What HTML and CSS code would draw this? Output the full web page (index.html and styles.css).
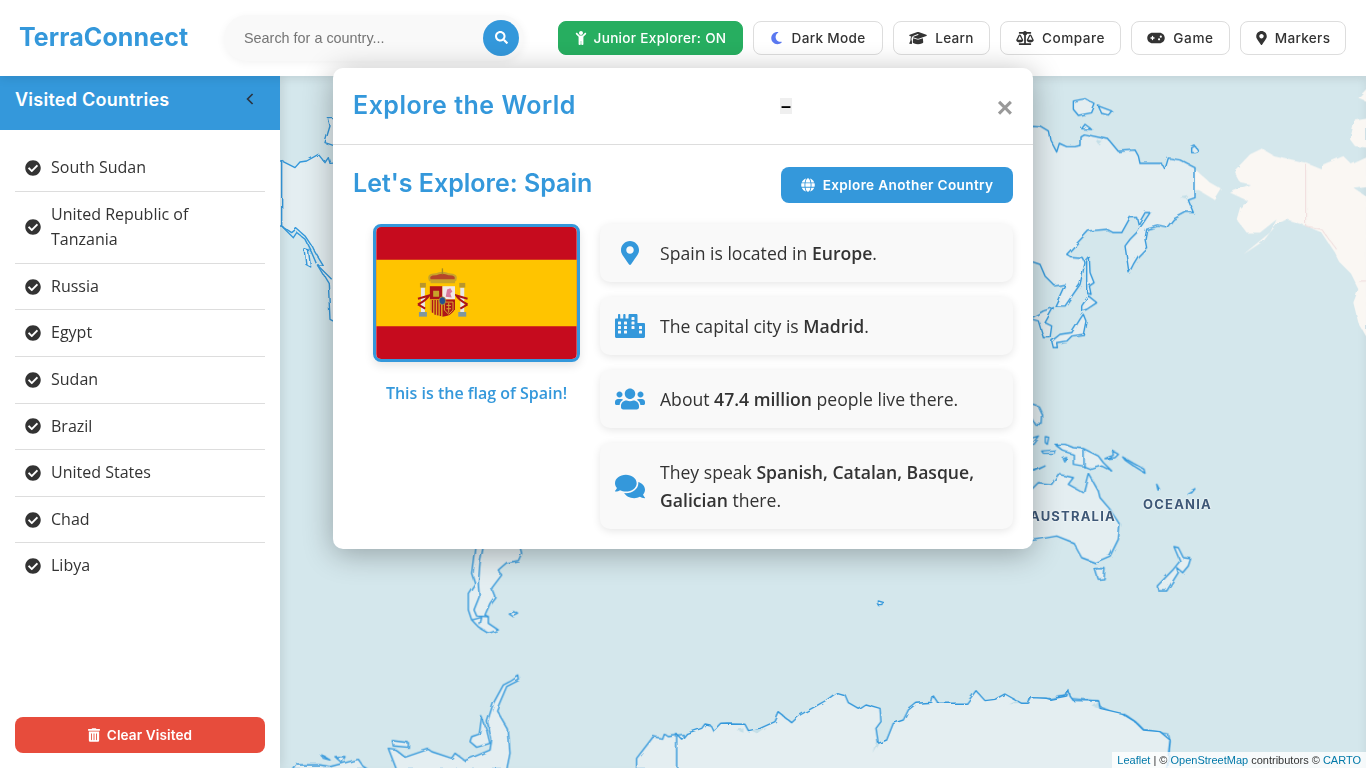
FILE: index.html
```html
<!DOCTYPE html>
<html lang="en">
<head>
  <meta charset="UTF-8" />
  <meta name="viewport" content="width=device-width, initial-scale=1.0"/>
  <title>TerraConnect</title>
  <link rel="stylesheet" href="styles.css">
</head>
<body>
  <svg class="icon-defs" xmlns="http://www.w3.org/2000/svg">
    <symbol id="i-search" viewBox="0 0 512 512"><path d="M505 442.7L405.3 343c-4.5-4.5-10.6-7-17-7H372c27.6-35.3 44-79.7 44-128C416 93.1 322.9 0 208 0S0 93.1 0 208s93.1 208 208 208c48.3 0 92.7-16.4 128-44v16.3c0 6.4 2.5 12.5 7 17l99.7 99.7c9.4 9.4 24.6 9.4 33.9 0l28.3-28.3c9.4-9.4 9.4-24.6.1-34zM208 336c-70.7 0-128-57.2-128-128 0-70.7 57.2-128 128-128 70.7 0 128 57.2 128 128 0 70.7-57.2 128-128 128z"/></symbol>
    <symbol id="i-check" viewBox="0 0 512 512"><path d="M504 256c0 136.967-111.033 248-248 248S8 392.967 8 256 119.033 8 256 8s248 111.033 248 248zM227.314 387.314l184-184c6.248-6.248 6.248-16.379 0-22.627l-22.627-22.627c-6.248-6.249-16.379-6.249-22.628 0L216 308.118l-70.059-70.059c-6.248-6.248-16.379-6.248-22.628 0l-22.627 22.627c-6.248 6.248-6.248 16.379 0 22.627l104 104c6.249 6.249 16.379 6.249 22.628.001z"/></symbol>
    <symbol id="i-marker" viewBox="0 0 384 512"><path d="M172.268 501.67C26.97 291.031 0 269.413 0 192 0 85.961 85.961 0 192 0s192 85.961 192 192c0 77.413-26.97 99.031-172.268 309.67-9.535 13.774-29.93 13.773-39.464 0zM192 272c44.183 0 80-35.817 80-80s-35.817-80-80-80-80 35.817-80 80 35.817 80 80 80z"/></symbol>
    <symbol id="i-moon" viewBox="0 0 384 512"><path d="M223.5 32C100 32 0 132.3 0 256S100 480 223.5 480c60.6 0 115.5-24.2 155.8-63.4c5-4.9 6.3-12.5 3.1-18.7s-10.1-9.7-17-8.5c-9.8 1.7-19.8 2.6-30.1 2.6c-96.9 0-175.5-78.8-175.5-176c0-65.8 36-123.1 89.3-153.3c6.1-3.5 9.2-10.5 7.7-17.3s-7.3-11.9-14.3-12.5c-6.3-.5-12.6-.8-19-.8z"/></symbol>
    <symbol id="i-trash" viewBox="0 0 448 512"><path d="M32 464a48 48 0 0 0 48 48h288a48 48 0 0 0 48-48V128H32zm272-256a16 16 0 0 1 32 0v224a16 16 0 0 1-32 0zm-96 0a16 16 0 0 1 32 0v224a16 16 0 0 1-32 0zm-96 0a16 16 0 0 1 32 0v224a16 16 0 0 1-32 0zM432 32H312l-9.4-18.7A24 24 0 0 0 281.1 0H166.8a23.72 23.72 0 0 0-21.4 13.3L136 32H16A16 16 0 0 0 0 48v32a16 16 0 0 0 16 16h416a16 16 0 0 0 16-16V48a16 16 0 0 0-16-16z"/></symbol>
    <symbol id="i-cap" viewBox="0 0 640 512"><path d="M320 32c-8.1 0-16.1 1.4-23.7 4.1L15.8 137.4C6.3 140.9 0 149.9 0 160s6.3 19.1 15.8 22.6l57.9 20.9C57.3 229.3 48 259.8 48 291.9v28.1c0 28.4-10.8 57.7-22.3 80.8c-6.5 13-13.9 25.8-22.5 37.6C0 442.7-.9 448.3 .9 453.4s6 8.9 11.2 10.2l64 16c4.2 1.1 8.7 .3 12.4-2s6.3-6.1 7.1-10.4c8.6-42.8 4.3-81.2-2.1-108.7C90.3 344.3 86 329.8 80 316.5V291.9c0-30.2 10.2-58.7 27.9-81.5c12.9-15.5 29.6-28 49.2-35.7l157-61.7c8.2-3.2 17.5 .8 20.7 9s-.8 17.5-9 20.7l-157 61.7c-12.4 4.9-23.3 12.4-32.2 21.6l159.6 57.6c7.6 2.7 15.6 4.1 23.7 4.1s16.1-1.4 23.7-4.1L624.2 182.6c9.5-3.4 15.8-12.5 15.8-22.6s-6.3-19.1-15.8-22.6L343.7 36.1C336.1 33.4 328.1 32 320 32zM128 408c0 35.3 86 72 192 72s192-36.7 192-72L496.7 262.6 354.5 314c-11.1 4-22.8 6-34.5 6s-23.5-2-34.5-6L143.3 262.6 128 408z"/></symbol>
    <symbol id="i-scale" viewBox="0 0 640 512"><path d="M256 336h-.02c0-16.18 1.34-8.73-85.05-181.51-17.65-35.29-68.19-35.36-85.87 0C-2.06 328.75.02 320.33.02 336H0c0 44.18 57.31 80 128 80s128-35.82 128-80zM128 176l72 144H56l72-144zm511.98 160c0-16.18 1.34-8.73-85.05-181.51-17.65-35.29-68.19-35.36-85.87 0-87.12 174.26-85.04 165.84-85.04 181.51H384c0 44.18 57.31 80 128 80s128-35.82 128-80h-.02zM440 320l72-144 72 144H440zm88 128H352V153.25c23.51-10.29 41.16-31.48 46.39-57.25H528c8.84 0 16-7.16 16-16V48c0-8.84-7.16-16-16-16H383.64C369.04 12.68 346.09 0 320 0s-49.04 12.68-63.64 32H112c-8.84 0-16 7.16-16 16v32c0 8.84 7.16 16 16 16h129.61c5.23 25.76 22.87 46.96 46.39 57.25V448H112c-8.84 0-16 7.16-16 16v32c0 8.84 7.16 16 16 16h416c8.84 0 16-7.16 16-16v-32c0-8.84-7.16-16-16-16z"/></symbol>
    <symbol id="i-gamepad" viewBox="0 0 640 512"><path d="M192 64C86 64 0 150 0 256S86 448 192 448H448c106 0 192-86 192-192s-86-192-192-192H192zM496 168a40 40 0 1 1 0 80 40 40 0 1 1 0-80zM392 304a40 40 0 1 1 80 0 40 40 0 1 1 -80 0zM168 200c0-13.3 10.7-24 24-24s24 10.7 24 24v32h32c13.3 0 24 10.7 24 24s-10.7 24-24 24H216v32c0 13.3-10.7 24-24 24s-24-10.7-24-24V280H136c-13.3 0-24-10.7-24-24s10.7-24 24-24h32V200z"/></symbol>
    <symbol id="i-globe" viewBox="0 0 496 512"><path d="M336.5 160C322 70.7 287.8 8 248 8s-74 62.7-88.5 152h177zM152 256c0 22.2 1.2 43.5 3.3 64h185.3c2.1-20.5 3.3-41.8 3.3-64s-1.2-43.5-3.3-64H155.3c-2.1 20.5-3.3 41.8-3.3 64zm324.7-96c-28.6-67.9-86.5-120.4-158-141.6 24.4 33.8 41.2 84.7 50 141.6h108zM177.2 18.4C105.8 39.6 47.8 92.1 19.3 160h108c8.7-56.9 25.5-107.8 49.9-141.6zM487.4 192H372.7c2.1 21 3.3 42.5 3.3 64s-1.2 43-3.3 64h114.6c5.5-20.5 8.6-41.8 8.6-64s-3.1-43.5-8.5-64zM120 256c0-21.5 1.2-43 3.3-64H8.6C3.2 212.5 0 233.8 0 256s3.2 43.5 8.6 64h114.6c-2-21-3.2-42.5-3.2-64zm39.5 96c14.5 89.3 48.7 152 88.5 152s74-62.7 88.5-152h-177zm159.3 141.6c71.4-21.2 129.4-73.7 158-141.6h-108c-8.8 56.9-25.6 107.8-50 141.6zM19.3 352c28.6 67.9 86.5 120.4 158 141.6-24.4-33.8-41.2-84.7-50-141.6h-108z"/></symbol>
    <symbol id="i-users" viewBox="0 0 640 512"><path d="M96 224c35.3 0 64-28.7 64-64s-28.7-64-64-64-64 28.7-64 64 28.7 64 64 64zm448 0c35.3 0 64-28.7 64-64s-28.7-64-64-64-64 28.7-64 64 28.7 64 64 64zm32 32h-64c-17.6 0-33.5 7.1-45.1 18.6 40.3 22.1 68.9 62 75.1 109.4h66c17.7 0 32-14.3 32-32v-32c0-35.3-28.7-64-64-64zm-256 0c61.9 0 112-50.1 112-112S381.9 32 320 32 208 82.1 208 144s50.1 112 112 112zm76.8 32h-8.3c-20.8 10-43.9 16-68.5 16s-47.6-6-68.5-16h-8.3C179.6 288 128 339.6 128 403.2V432c0 26.5 21.5 48 48 48h288c26.5 0 48-21.5 48-48v-28.8c0-63.6-51.6-115.2-115.2-115.2zm-223.7-13.4C161.5 263.1 145.6 256 128 256H64c-35.3 0-64 28.7-64 64v32c0 17.7 14.3 32 32 32h65.9c6.3-47.4 34.9-87.3 75.2-109.4z"/></symbol>
    <symbol id="i-comments" viewBox="0 0 576 512"><path d="M416 192c0-88.4-93.1-160-208-160S0 103.6 0 192c0 34.3 14.1 65.9 38 92-13.4 30.2-35.5 54.2-35.8 54.5-2.2 2.3-2.8 5.7-1.5 8.7S4.8 352 8 352c36.6 0 66.9-12.3 88.7-25 32.2 15.7 70.3 25 111.3 25 114.9 0 208-71.6 208-160zm122 220c23.9-26 38-57.7 38-92 0-66.9-53.5-124.2-129.3-148.1.9 6.6 1.3 13.3 1.3 20.1 0 105.9-107.7 192-240 192-10.8 0-21.3-.8-31.7-1.9C207.8 439.6 281.8 480 368 480c41 0 79.1-9.2 111.3-25 21.8 12.7 52.1 25 88.7 25 3.2 0 6.1-1.9 7.3-4.8 1.3-2.9.7-6.3-1.5-8.7-.3-.3-22.4-24.2-35.8-54.5z"/></symbol>
    <symbol id="i-city" viewBox="0 0 640 512"><path d="M616 192H480V24c0-13.26-10.74-24-24-24H312c-13.26 0-24 10.74-24 24v72h-64V16c0-8.84-7.16-16-16-16h-16c-8.84 0-16 7.16-16 16v80h-64V16c0-8.84-7.16-16-16-16H80c-8.84 0-16 7.16-16 16v80H24c-13.26 0-24 10.74-24 24v360c0 17.67 14.33 32 32 32h576c17.67 0 32-14.33 32-32V216c0-13.26-10.75-24-24-24zM128 404c0 6.63-5.37 12-12 12H76c-6.63 0-12-5.37-12-12v-40c0-6.63 5.37-12 12-12h40c6.63 0 12 5.37 12 12v40zm0-96c0 6.63-5.37 12-12 12H76c-6.63 0-12-5.37-12-12v-40c0-6.63 5.37-12 12-12h40c6.63 0 12 5.37 12 12v40zm0-96c0 6.63-5.37 12-12 12H76c-6.63 0-12-5.37-12-12v-40c0-6.63 5.37-12 12-12h40c6.63 0 12 5.37 12 12v40zm128 192c0 6.63-5.37 12-12 12h-40c-6.63 0-12-5.37-12-12v-40c0-6.63 5.37-12 12-12h40c6.63 0 12 5.37 12 12v40zm0-96c0 6.63-5.37 12-12 12h-40c-6.63 0-12-5.37-12-12v-40c0-6.63 5.37-12 12-12h40c6.63 0 12 5.37 12 12v40zm0-96c0 6.63-5.37 12-12 12h-40c-6.63 0-12-5.37-12-12v-40c0-6.63 5.37-12 12-12h40c6.63 0 12 5.37 12 12v40zm160 96c0 6.63-5.37 12-12 12h-40c-6.63 0-12-5.37-12-12v-40c0-6.63 5.37-12 12-12h40c6.63 0 12 5.37 12 12v40zm0-96c0 6.63-5.37 12-12 12h-40c-6.63 0-12-5.37-12-12v-40c0-6.63 5.37-12 12-12h40c6.63 0 12 5.37 12 12v40zm0-96c0 6.63-5.37 12-12 12h-40c-6.63 0-12-5.37-12-12V76c0-6.63 5.37-12 12-12h40c6.63 0 12 5.37 12 12v40zm160 288c0 6.63-5.37 12-12 12h-40c-6.63 0-12-5.37-12-12v-40c0-6.63 5.37-12 12-12h40c6.63 0 12 5.37 12 12v40zm0-96c0 6.63-5.37 12-12 12h-40c-6.63 0-12-5.37-12-12v-40c0-6.63 5.37-12 12-12h40c6.63 0 12 5.37 12 12v40z"/></symbol>
    <symbol id="i-child" viewBox="0 0 384 512"><path d="M120 72c0-39.765 32.235-72 72-72s72 32.235 72 72c0 39.764-32.235 72-72 72s-72-32.236-72-72zm254.627 1.373c-12.496-12.497-32.758-12.497-45.254 0L242.745 160H141.254L54.627 73.373c-12.496-12.497-32.758-12.497-45.254 0-12.497 12.497-12.497 32.758 0 45.255L104 213.254V480c0 17.673 14.327 32 32 32h16c17.673 0 32-14.327 32-32V368h16v112c0 17.673 14.327 32 32 32h16c17.673 0 32-14.327 32-32V213.254l94.627-94.627c12.497-12.497 12.497-32.757 0-45.254z"/></symbol>
  </svg>

  <header class="topbar">
    <div class="logo">TerraConnect</div>
    <div class="search">
      <input class="search-input" type="text" placeholder="Search for a country...">
      <button class="search-btn"><svg class="ico"><use href="#i-search"/></svg></button>
    </div>
    <nav class="tools">
      <button class="tool tool-on"><svg class="ico ico-child"><use href="#i-child"/></svg>Junior Explorer: ON</button>
      <button class="tool tool-dark"><svg class="ico ico-moon"><use href="#i-moon"/></svg>Dark Mode</button>
      <button class="tool tool-learn"><svg class="ico ico-wide"><use href="#i-cap"/></svg>Learn</button>
      <button class="tool tool-compare"><svg class="ico ico-wide"><use href="#i-scale"/></svg>Compare</button>
      <button class="tool tool-game"><svg class="ico ico-wide"><use href="#i-gamepad"/></svg>Game</button>
      <button class="tool tool-markers"><svg class="ico ico-pin"><use href="#i-marker"/></svg>Markers</button>
    </nav>
  </header>

  <main class="content">
    <aside class="sidebar">
      <div class="side-head">
        <h3>Visited Countries</h3>
        <svg class="side-toggle" viewBox="0 0 8 12"><path d="M6.6 1L1.6 6l5 5"/></svg>
      </div>
      <ul class="visited">
        <li><svg class="ico-check"><use href="#i-check"/></svg><span>South Sudan</span></li>
        <li><svg class="ico-check"><use href="#i-check"/></svg><span>United Republic of Tanzania</span></li>
        <li><svg class="ico-check"><use href="#i-check"/></svg><span>Russia</span></li>
        <li><svg class="ico-check"><use href="#i-check"/></svg><span>Egypt</span></li>
        <li><svg class="ico-check"><use href="#i-check"/></svg><span>Sudan</span></li>
        <li><svg class="ico-check"><use href="#i-check"/></svg><span>Brazil</span></li>
        <li><svg class="ico-check"><use href="#i-check"/></svg><span>United States</span></li>
        <li><svg class="ico-check"><use href="#i-check"/></svg><span>Chad</span></li>
        <li><svg class="ico-check"><use href="#i-check"/></svg><span>Libya</span></li>
      </ul>
      <button class="clear-btn"><svg class="ico ico-trash"><use href="#i-trash"/></svg>Clear Visited</button>
    </aside>

    <section class="map">
      <svg class="map-svg" viewBox="0 0 1086 692" xmlns="http://www.w3.org/2000/svg">
        <defs>
          <filter id="rough" x="-2%" y="-2%" width="104%" height="104%" color-interpolation-filters="sRGB">
            <feTurbulence type="fractalNoise" baseFrequency="0.09" numOctaves="2" seed="4"/>
            <feDisplacementMap in="SourceGraphic" scale="4"/>
          </filter>
        </defs>
        <!-- coordinates are 3x, one group per map area -->
        <g class="coast">
        <g transform="translate(0 0) scale(.3333)">
          <path class="land" d="M-5 255L5 255L45 275L60 258L80 255L115 235L135 260L145 245L150 262L180 260L180 745L150 730L145 620L115 570L130 570L100 520L95 510L75 480L50 458L35 470L5 450L-5 450Z"/>
          <path class="land" d="M145 128L180 128L180 215L135 200L150 150Z"/>
          <path class="land" d="M72 518L85 522L92 573L78 565Z"/>
          <path class="line" d="M5 450L40 485L50 470L75 490L95 530L110 565M115 570L155 610M5 255V450"/>
        </g>
        <g transform="translate(750 0) scale(.3333)">
          <path class="cream" d="M612 285L660 235L695 218L730 238L825 260L875 280L880 265L940 240L965 265L1008 245L1008 330L970 335L1008 360L1008 780L985 740L970 680L985 640L960 590L930 560L915 530L875 470L830 450L770 430L740 445L700 495L640 535L720 470L740 430L690 470L650 470L620 430L630 395L655 375L600 350L660 325L630 318Z"/>
          <path class="cream" d="M495 280L540 320L575 340L555 372L510 345L495 345Z"/>
          <path class="cream" d="M985 65L1008 40V75ZM960 190L975 130L1008 125V215L975 210Z"/>
          <path class="border" d="M827 260V450L875 460L920 520M985 615H1008"/>
          <path class="land" d="M0 148L30 150L55 165L60 190L80 228L88 202L110 212L135 212L150 208L150 180L160 174L235 190L265 226L315 222L325 240L330 262L395 262L405 280L415 246L450 252L495 275V365L475 372L490 410L470 408L430 430L410 455L385 450L350 460L345 490L350 515L325 540L310 565L297 590L285 510L300 490L320 470L360 410L345 410L325 445L320 425L300 425L275 470L250 470L230 460L175 465L110 535L125 545L160 548L165 560L150 625L105 690L75 690L105 625L75 630L45 600L30 565L0 555Z"/>
          <path class="land" d="M130 75L165 68L195 85L185 110L145 118L130 100ZM205 90L245 105L235 117L215 112ZM155 158L165 145L185 160ZM485 215L495 210L505 225L495 230L485 230Z"/>
          <path class="land" d="M170 555L178 545L180 590L192 620L178 630L183 655L170 650Z"/>
          <path class="land" d="M155 690L175 660L200 680L170 700L155 705ZM160 715L168 735L160 775L125 780L110 795L80 800L82 815L70 815L65 795L90 775L125 770L150 730Z"/>
          <path class="land" d="M0 728L40 705L70 695L45 740L65 750L60 785L40 785L25 735Z"/>
          <path class="lake" d="M195 190L215 195L205 205ZM450 365L475 360L470 370Z"/>
        </g>
        <g transform="translate(750 300) scale(.3333)">
          <path class="land" d="M-5 350L25 320L65 325L85 295L130 305L115 325L160 350L175 292L205 345L210 365L240 400L270 445L265 490L240 540L195 560L155 545L130 500L80 480L-5 495Z"/>
          <path class="land" d="M75 205L105 205L130 215L160 218L205 240L220 260L245 285L215 270L185 280L160 270L130 265L130 235L100 225Z"/>
          <path class="line" d="M162 218V275"/>
          <path class="land" d="M195 578L225 578L222 608L205 610Z"/>
          <path class="land" d="M432 512L445 515L460 545L482 548L475 570L458 590L440 575L445 590L410 645L385 645L382 630L430 580L450 555Z"/>
          <path class="land" d="M225 248L250 238L248 225L265 235L255 245ZM278 243L310 262L342 280L345 292L320 276L285 252ZM380 325L388 340L384 342ZM472 352L495 338L485 350ZM46 182L56 184L52 205L46 200ZM0 192L28 183L12 205L0 205ZM35 225L75 222L72 232L40 232ZM100 248L110 245L105 258ZM10 285L45 270L15 285Z"/>
          <path class="land" d="M-5 80L25 90L38 118L36 145L15 145L-5 110Z"/>
          <path class="land" d="M0 968L60 968L110 960L115 942L120 968L205 975L210 992L270 1020L280 1012L320 1040L340 1060L415 1075L420 1095L410 1210L0 1210Z"/>
        </g>
        <g transform="translate(0 464) scale(.3333)">
          <path class="land" d="M585 20L575 100L585 130L565 160L565 210L575 240L600 265L625 280L655 270L625 250L625 230L615 225L630 190L645 170L635 145L665 105L655 90L680 68L715 62L725 40L720 20Z"/>
          <path class="line" d="M610 20L600 70L595 130L598 170L582 210L590 228L625 230M575 240L605 232L600 255"/>
          <path class="land" d="M688 222L700 215L716 222L700 230Z"/>
          <path class="land" d="M40 690L50 675L120 675L150 680L235 658L250 680L265 690Z"/>
          <path class="land" d="M325 625L345 628L375 652L445 628L455 635L515 655L525 640L555 662L630 630L635 600L622 545L640 490L670 435L690 425L716 408L718 420L680 440L650 510L685 570L690 640L680 690L350 690Z"/>
          <path class="land" d="M605 530L620 570L630 610L590 622L570 605L575 590L598 582Z"/>
          <path class="land" d="M337 602L385 608L385 622L340 618ZM125 645L150 660L130 655ZM165 650L195 650L185 668Z"/>
          <path class="land" d="M1070 690L1070 655L1120 590L1145 595L1150 580L1165 590L1210 583V690Z"/>
        </g>
        <g transform="translate(400 464) scale(.3333)">
          <path class="land" d="M-10 583L5 598L20 580L65 565L75 552L90 555L103 575L125 553L145 552L195 553L205 572L240 565L285 545L297 518L335 548L360 525L410 497L440 480L470 458L495 465L505 488L535 505L555 492L600 505L603 545L588 565L595 610L620 600L640 550L670 540L685 510L710 490L755 487L760 468L775 490L860 490L888 452L915 482L945 478L975 462L1025 490L1045 490L1055 473L1100 475L1110 478L1160 468L1165 450L1170 468L1180 482L1255 483L1260 505L1325 520L1365 545L1390 570L1440 575L1470 600L1460 690L-10 690Z"/>
          <path class="land" d="M595 183L612 188L608 197L596 197Z"/>
          <path class="lake" d="M170 570L190 565L190 578ZM215 572L260 565L235 582ZM985 490L1010 478L1015 490ZM1238 500L1255 485L1255 505ZM590 610L598 612L580 642Z"/>
        </g>
        </g>
      </svg>
      <span class="map-label label-oceania">OCEANIA</span>
      <span class="map-label label-australia">AUSTRALIA</span>
      <div class="attribution"><a href="#">Leaflet</a> | © <a href="#">OpenStreetMap</a> contributors © <a href="#">CARTO</a></div>
    </section>

    <div class="modal">
      <div class="modal-head">
        <h2>Explore the World</h2>
        <button class="modal-min">–</button>
        <span class="modal-close">×</span>
      </div>
      <div class="modal-body">
        <div class="explore-head">
          <h3>Let's Explore: Spain</h3>
          <button class="explore-btn"><svg class="ico"><use href="#i-globe"/></svg>Explore Another Country</button>
        </div>
        <div class="explore-grid">
          <div class="flag-col">
            <svg class="flag" viewBox="0 0 202 133" xmlns="http://www.w3.org/2000/svg">
              <rect width="202" height="133" fill="#c60b1e"/>
              <rect y="33" width="202" height="67" fill="#ffc400"/>
              <g transform="translate(34 33) scale(.3333)">
                <path d="M60 62Q52 44 78 44Q98 34 118 44Q144 44 137 62Z" fill="#b5462a" stroke="#c8a32a" stroke-width="6"/>
                <rect x="62" y="62" width="74" height="9" fill="#c8a32a"/>
                <rect x="96" y="26" width="4" height="18" fill="#a58a20"/>
                <rect x="33" y="84" width="12" height="74" fill="#e8e8e8"/>
                <rect x="152" y="84" width="12" height="74" fill="#e8e8e8"/>
                <rect x="30" y="70" width="18" height="14" fill="#b9962b"/>
                <rect x="149" y="70" width="18" height="14" fill="#b9962b"/>
                <rect x="27" y="158" width="24" height="14" fill="#7e97a0"/>
                <rect x="146" y="158" width="24" height="14" fill="#7e97a0"/>
                <path d="M24 135Q50 122 58 108L24 118M24 135L46 148M174 135Q148 122 140 108L174 118M174 135L152 148" fill="none" stroke="#ad1519" stroke-width="6"/>
                <rect x="60" y="80" width="38" height="40" fill="#ad1519"/>
                <rect x="98" y="80" width="38" height="40" fill="#f0e8e8"/>
                <path d="M60 120H98V172Q72 172 60 150Z" fill="#e0a91e"/>
                <path d="M98 120H136V150Q124 172 98 172Z" fill="#ad1519"/>
                <path d="M68 122V160M76 122V166M84 122V168M92 122V170" stroke="#ad1519" stroke-width="4"/>
                <path d="M104 128H130V152L117 165L104 152ZM110 138H124M110 148H124M117 130V160" fill="none" stroke="#d9a62c" stroke-width="3"/>
                <path d="M108 112L112 90L122 86L128 96L122 102L126 114Z" fill="#d97a9c"/>
                <path d="M70 112V94H88V112Z" fill="#c8a32a"/>
                <ellipse cx="98" cy="124" rx="10" ry="12" fill="#25508f" stroke="#c8a32a" stroke-width="2"/>
              </g>
            </svg>
            <p class="flag-note">This is the flag of Spain!</p>
          </div>
          <div class="facts">
            <div class="fact"><span class="fact-ico"><svg class="ico-pin-lg"><use href="#i-marker"/></svg></span><p>Spain is located in <strong>Europe</strong>.</p></div>
            <div class="fact"><span class="fact-ico"><svg class="ico-lg"><use href="#i-city"/></svg></span><p>The capital city is <strong>Madrid</strong>.</p></div>
            <div class="fact"><span class="fact-ico"><svg class="ico-lg"><use href="#i-users"/></svg></span><p>About <strong>47.4 million</strong> people live there.</p></div>
            <div class="fact"><span class="fact-ico"><svg class="ico-talk"><use href="#i-comments"/></svg></span><p>They speak <strong>Spanish, Catalan, Basque,</strong> <strong>Galician</strong> there.</p></div>
          </div>
        </div>
      </div>
    </div>
  </main>
</body>
</html>
```

FILE: styles.css
```css
* {
  box-sizing: border-box;
}

body {
  margin: 0;
  height: 768px;
  overflow: hidden;
  font-family: "Open Sans", sans-serif;
  line-height: 1.6;
  color: #333;
  background: #fff;
}

.icon-defs {
  display: none;
}

.ico {
  width: 14px;
  height: 14px;
  fill: currentColor;
  flex-shrink: 0;
}

/* top bar */
.topbar {
  position: relative;
  z-index: 20;
  height: 76px;
  display: flex;
  align-items: center;
  padding: 0 20px;
  background: #fff;
  box-shadow: 0 2px 10px rgba(0,0,0,0.1);
}

.logo {
  width: 205px;
  margin-left: -1px;
  padding-bottom: 2px;
  font-family: Inter, sans-serif;
  font-size: 25px;
  font-weight: 700;
  letter-spacing: 0.1px;
  color: #3498db;
}

.search {
  width: 300px;
  height: 46px;
  display: flex;
  align-items: center;
  padding: 0 5px 0 20px;
  background: #f9f9f9;
  border-radius: 23px;
  box-shadow: 0 2px 8px rgba(0,0,0,0.05);
}

.search-input {
  flex: 1;
  min-width: 0;
  border: 0;
  outline: 0;
  background: transparent;
  font-family: "Liberation Sans", sans-serif;
  font-size: 14.4px;
  padding: 0;
}

.search-btn {
  width: 36px;
  height: 36px;
  display: flex;
  align-items: center;
  justify-content: center;
  padding: 0 0 2px;
  border: 0;
  border-radius: 50%;
  background: #3498db;
  color: #fff;
}

.search-btn .ico {
  width: 13px;
  height: 13px;
}

.tools {
  display: flex;
  margin-left: 34px;
  gap: 10px;
}

.tool {
  height: 34px;
  display: flex;
  align-items: center;
  justify-content: center;
  gap: 8px;
  padding: 0;
  font-family: Inter, sans-serif;
  font-size: 13.6px;
  font-weight: 500;
  letter-spacing: 0.3px;
  color: #333;
  white-space: nowrap;
  background: #fff;
  border: 1px solid #ddd;
  border-radius: 8px;
}

.tool-on {
  width: 185px;
  gap: 7px;
  background: #27ae60;
  border-color: #27ae60;
  color: #fff;
}

.tool-dark {
  width: 130px;
  gap: 10px;
}

.tool-learn {
  width: 97px;
}

.tool-compare {
  width: 121px;
  letter-spacing: 0.5px;
}

.tool-game {
  width: 99px;
  letter-spacing: 0.6px;
}

.tool-markers {
  width: 106px;
}

.ico-child {
  width: 12px;
  height: 14px;
}

.ico-moon {
  width: 11px;
  height: 14px;
  fill: #5a78f0;
}

.ico-wide {
  width: 18px;
  height: 14px;
}

.ico-pin {
  width: 11px;
  height: 14px;
}

/* main area */
.content {
  position: relative;
  height: 692px;
  display: flex;
}

.sidebar {
  position: relative;
  z-index: 5;
  width: 280px;
  display: flex;
  flex-direction: column;
  background: #fff;
  box-shadow: 2px 0 10px rgba(0,0,0,0.1);
}

.side-head {
  height: 54px;
  display: flex;
  justify-content: space-between;
  padding: 10px 26px 0 15px;
  background: #3498db;
  color: #fff;
}

.side-head h3 {
  margin: 0;
  font-family: Inter, sans-serif;
  font-size: 18px;
  font-weight: 600;
  line-height: 28px;
  letter-spacing: 0.25px;
}

.side-toggle {
  width: 8px;
  height: 12px;
  margin-top: 7px;
  fill: none;
  stroke: #2b3440;
  stroke-width: 1.7;
}

.visited {
  flex: 1;
  margin: 0;
  padding: 15px 15px 0;
  list-style: none;
}

.visited li {
  display: flex;
  align-items: center;
  gap: 10px;
  padding: 10px;
  font-size: 16px;
  border-bottom: 1px solid #ddd;
}

.visited li:last-child {
  border-bottom: 0;
}

.ico-check {
  width: 16px;
  height: 16px;
  flex-shrink: 0;
  fill: #333;
}

.clear-btn {
  height: 36px;
  margin: 0 15px 15px;
  display: flex;
  align-items: center;
  justify-content: center;
  gap: 7px;
  border: 0;
  border-radius: 8px;
  background: #e74c3c;
  color: #fff;
  font-family: Inter, sans-serif;
  font-size: 13.6px;
  font-weight: 600;
  letter-spacing: 0.1px;
}

.ico-trash {
  width: 12px;
  height: 14px;
}

/* map */
.map {
  position: relative;
  flex: 1;
  overflow: hidden;
  background: #d4e7ec;
  box-shadow: inset -6px 0 8px -4px rgba(0,0,0,0.05);
}

.map-svg {
  position: absolute;
  left: 0;
  top: 0;
  width: 1086px;
  height: 692px;
}

.coast {
  filter: url(#rough);
}

.land {
  fill: #e4eef1;
  stroke: #3498db;
  stroke-width: 1.4;
  stroke-linejoin: round;
  vector-effect: non-scaling-stroke;
}

.line {
  fill: none;
  stroke: #3498db;
  stroke-width: 1.4;
  vector-effect: non-scaling-stroke;
}

.cream {
  fill: #faf7f3;
}

.border {
  fill: none;
  stroke: #f0dcdc;
  stroke-width: 1;
  vector-effect: non-scaling-stroke;
}

.lake {
  fill: #c4dfe8;
}

.map-label {
  position: absolute;
  font-family: Inter, sans-serif;
  font-size: 13px;
  font-weight: 700;
  line-height: 16px;
  letter-spacing: 1.2px;
  color: #3e5877;
  text-shadow: 0 0 2px #fff, 0 0 2px #fff;
}

.label-oceania {
  left: 863px;
  top: 420px;
}

.label-australia {
  left: 750px;
  top: 432px;
}

.attribution {
  position: absolute;
  right: 0;
  bottom: 0;
  height: 16px;
  padding: 0 5px;
  font-family: "Liberation Sans", sans-serif;
  font-size: 11px;
  line-height: 16px;
  color: #333;
  background: rgba(255,255,255,0.8);
}

.attribution a {
  color: #0078a8;
  text-decoration: none;
}

/* modal */
.modal {
  position: absolute;
  z-index: 30;
  left: 333px;
  top: -8px;
  width: 700px;
  background: #fff;
  border-radius: 10px;
  box-shadow: 0 5px 30px rgba(0,0,0,0.3);
}

.modal-head {
  position: relative;
  height: 77px;
  display: flex;
  align-items: center;
  padding: 0 20px;
  border-bottom: 1px solid #ddd;
}

.modal-head h2 {
  margin: 0;
  flex: 1;
  padding-bottom: 2px;
  font-family: Inter, sans-serif;
  font-size: 25px;
  font-weight: 600;
  letter-spacing: 0.5px;
  color: #3498db;
}

.modal-min {
  position: absolute;
  left: 447px;
  top: 30px;
  width: 12px;
  height: 16px;
  padding: 0;
  border: 0;
  background: #efefef;
  color: #000;
  font-family: "Liberation Sans", sans-serif;
  font-size: 18px;
  font-weight: 700;
  line-height: 16px;
}

.modal-close {
  padding-top: 3px;
  font-family: "Liberation Sans", sans-serif;
  font-size: 28px;
  font-weight: 700;
  line-height: 1;
  color: #999;
}

.modal-body {
  padding: 22px 20px 19.4px;
}

.explore-head {
  display: flex;
  align-items: center;
  justify-content: space-between;
  margin-bottom: 20.6px;
}

.explore-head h3 {
  margin: 0;
  padding-bottom: 3px;
  font-family: Inter, sans-serif;
  font-size: 25px;
  font-weight: 600;
  line-height: 33px;
  color: #3498db;
}

.explore-btn {
  width: 232px;
  height: 36px;
  display: flex;
  align-items: center;
  justify-content: center;
  gap: 8px;
  border: 0;
  border-radius: 8px;
  background: #3498db;
  color: #fff;
  font-family: Inter, sans-serif;
  font-size: 13.6px;
  font-weight: 600;
  letter-spacing: 0.35px;
}

.explore-grid {
  display: flex;
}

.flag-col {
  width: 247px;
  padding: 0.4px 20px 0;
  text-align: center;
}

.flag {
  display: block;
  width: 207px;
  height: 138px;
  border: 3px solid #3498db;
  border-radius: 8px;
  box-shadow: 0 4px 10px rgba(0,0,0,0.1);
}

.flag-note {
  margin: 19px 0 0;
  font-size: 16px;
  font-weight: 600;
  color: #3498db;
}

.facts {
  flex: 1;
  display: flex;
  flex-direction: column;
  gap: 15px;
}

.fact {
  display: flex;
  align-items: center;
  gap: 15px;
  padding: 15px;
  background: #f9f9f9;
  border-radius: 10px;
  box-shadow: 0 2px 8px rgba(0,0,0,0.1);
}

.fact p {
  margin: 0;
  font-size: 17.6px;
  line-height: 1.6;
}

.fact strong {
  font-weight: 600;
}

.fact-ico {
  width: 30px;
  flex-shrink: 0;
  display: flex;
  justify-content: center;
  color: #3498db;
  fill: #3498db;
}

.ico-lg {
  width: 30px;
  height: 24px;
}

.ico-pin-lg {
  width: 18px;
  height: 24px;
}

.ico-talk {
  width: 30px;
  height: 27px;
}
```
